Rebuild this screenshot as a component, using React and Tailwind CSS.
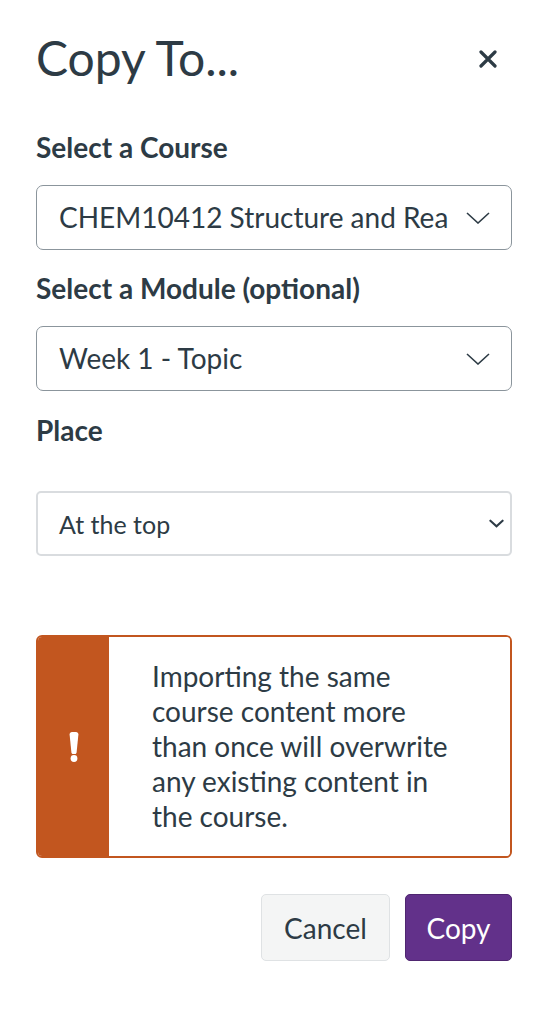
import { useState } from "react";

const font = { fontFamily: "Lato, 'Noto Sans', sans-serif" };

const Chevron = ({ className = "" }) => (
  <svg viewBox="0 0 24 12" className={className} fill="none" stroke="currentColor" strokeWidth="1.6">
    <path d="M1 1 L12 11 L23 1" />
  </svg>
);

const SmallChevron = () => (
  <svg viewBox="0 0 16 9" className="w-[15px] h-[9px] text-[#2d3b45]" fill="none" stroke="currentColor" strokeWidth="2.2" strokeLinecap="round">
    <path d="M1.5 1.5 L8 7.5 L14.5 1.5" />
  </svg>
);

const FieldSelect = ({ value }) => (
  <div className="flex items-center justify-between h-[65px] rounded-[7px] border border-[#8b959c] pl-[22px] pr-[21px] bg-white">
    <span className="text-[28px] leading-[1.2] text-[#2d3b45] whitespace-nowrap overflow-hidden flex-1 mr-[18px]">{value}</span>
    <Chevron className="w-[24px] h-[12px] text-[#2d3b45] shrink-0" />
  </div>
);

const Label = ({ children }) => (
  <div className="text-[28px] leading-[32px] font-bold text-[#2d3b45]">{children}</div>
);

export default function App() {
  const [place] = useState("At the top");

  return (
    <div className="min-h-screen bg-white pl-[36px] pr-[31px] pt-[28px]" style={font}>
      {/* header */}
      <div className="flex items-center justify-between">
        <h1 className="text-[48px] leading-[60px] font-normal text-[#2d3b45]">Copy To...</h1>
        <button className="mr-[15px] mt-[2px] text-[#2d3b45]" aria-label="Close">
          <svg viewBox="0 0 18 18" className="w-[18px] h-[18px]" stroke="currentColor" strokeWidth="3.2" strokeLinecap="round">
            <path d="M2 2 L16 16 M16 2 L2 16" />
          </svg>
        </button>
      </div>

      <div className="mt-[43px]">
        <Label>Select a Course</Label>
        <div className="mt-[22px]">
          <FieldSelect value="CHEM10412 Structure and Reactivity" />
        </div>
      </div>

      <div className="mt-[22px]">
        <Label>Select a Module (optional)</Label>
        <div className="mt-[22px]">
          <FieldSelect value="Week 1 - Topic" />
        </div>
      </div>

      <div className="mt-[23px]">
        <Label>Place</Label>
        <div className="mt-[45px] flex items-center justify-between h-[65px] rounded-[5px] border-2 border-[#d9dcdf] pl-[21px] pr-[6px]">
          <span className="text-[25px] leading-[1.2] text-[#2d3b45]">{place}</span>
          <SmallChevron />
        </div>
      </div>

      {/* warning */}
      <div className="mt-[79px] flex rounded-[6px] border-2 border-[#c2561f] overflow-hidden">
        <div className="w-[71px] bg-[#c2561f] flex items-center justify-center shrink-0">
          <svg viewBox="0 0 10 30" className="w-[10px] h-[30px]" fill="#ffffff">
            <path d="M0.6 2.4 C0.6 0.9 1.6 0 3 0 H7 C8.4 0 9.4 0.9 9.4 2.4 L7.6 20.5 C7.5 21.4 6.9 22 6 22 H4 C3.1 22 2.5 21.4 2.4 20.5 Z" />
            <circle cx="5" cy="26.5" r="3.4" />
          </svg>
        </div>
        <div className="flex-1 bg-white pl-[43px] py-[22px]">
          <p className="w-[306px] text-[28px] leading-[35px] text-[#2d3b45]">
            Importing the same course content more than once will overwrite any existing content in the course.
          </p>
        </div>
      </div>

      {/* actions */}
      <div className="mt-[36px] flex justify-end gap-[15px]">
        <button className="h-[67px] w-[129px] rounded-[5px] border border-[#dfe2e4] bg-[#f4f5f5] text-[28px] text-[#2d3b45]">
          Cancel
        </button>
        <button className="h-[67px] w-[107px] rounded-[5px] border border-[#4f2670] bg-[#62318a] text-[28px] text-white">
          Copy
        </button>
      </div>
    </div>
  );
}
